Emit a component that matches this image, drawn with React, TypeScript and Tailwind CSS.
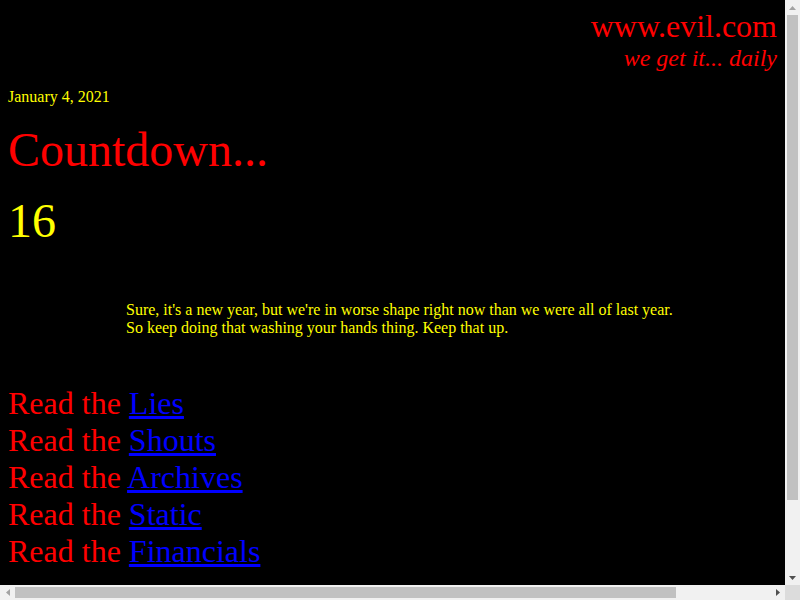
import React from "react";

const links = ["Lies", "Shouts", "Archives", "Static", "Financials"];

function Tri({ dir, color }: { dir: "up" | "down" | "left" | "right"; color: string }) {
  const pts =
    dir === "up"
      ? "0,4 3.5,0 7,4"
      : dir === "down"
      ? "0,0 7,0 3.5,4"
      : dir === "left"
      ? "4,0 4,7 0,3.5"
      : "0,0 0,7 4,3.5";
  const w = dir === "up" || dir === "down" ? 7 : 4;
  const h = dir === "up" || dir === "down" ? 4 : 7;
  return (
    <svg width={w} height={h} viewBox={`0 0 ${w} ${h}`}>
      <polygon points={pts} fill={color} />
    </svg>
  );
}

export default function App() {
  return (
    <div className="flex h-[600px] w-[800px] flex-col overflow-hidden bg-black">
      <div className="flex h-[585px]">
        <div className="h-[585px] w-[785px] overflow-hidden">
          <div
            className="bg-black px-2 pt-2"
            style={{ fontFamily: '"Liberation Serif", "Times New Roman", serif' }}
          >
            <div className="text-right text-[#ff0000]">
              <div className="text-[32px] leading-[37px]">www.evil.com</div>
              <div className="text-[24px] italic leading-[27.6px]">we get it... daily</div>
            </div>
            <div className="mt-[15px] text-[16px] leading-[18.4px] text-[#ffff00]">January 4, 2021</div>
            <div className="mt-[16px] text-[48px] leading-[55px] text-[#ff0000]">Countdown...</div>
            <div className="mt-[16px] text-[48px] leading-[55px] text-[#ffff00]">16</div>
            <div className="mt-[53px] ml-[118px] w-[771px] text-[16px] leading-[17.5px] text-[#ffff00]">
              Sure, it's a new year, but we're in worse shape right now than we were all of last year.
              <br />
              So keep doing that washing your hands thing. Keep that up.
            </div>
            <div className="mt-[49px] text-[32px] leading-[37px] text-[#ff0000]">
              {links.map((l) => (
                <div key={l}>
                  Read the{" "}
                  <a href="#" className="text-[#0000ff] underline">
                    {l}
                  </a>
                </div>
              ))}
            </div>
          </div>
        </div>
        <div className="flex h-[585px] w-[15px] flex-col bg-[#f1f1f1]">
          <div className="flex h-[15px] items-center justify-center">
            <Tri dir="up" color="#a3a3a3" />
          </div>
          <div className="flex h-[555px] flex-col px-[2px]">
            <div className="h-[485px] bg-[#c1c1c1]" />
          </div>
          <div className="flex h-[15px] items-center justify-center">
            <Tri dir="down" color="#505050" />
          </div>
        </div>
      </div>
      <div className="flex h-[15px]">
        <div className="flex w-[785px] bg-[#f1f1f1]">
          <div className="flex w-[15px] items-center justify-center">
            <Tri dir="left" color="#a3a3a3" />
          </div>
          <div className="flex w-[755px] py-[2px]">
            <div className="w-[661px] bg-[#c1c1c1]" />
          </div>
          <div className="flex w-[15px] items-center justify-center">
            <Tri dir="right" color="#505050" />
          </div>
        </div>
        <div className="w-[15px] bg-[#dcdcdc]" />
      </div>
    </div>
  );
}
